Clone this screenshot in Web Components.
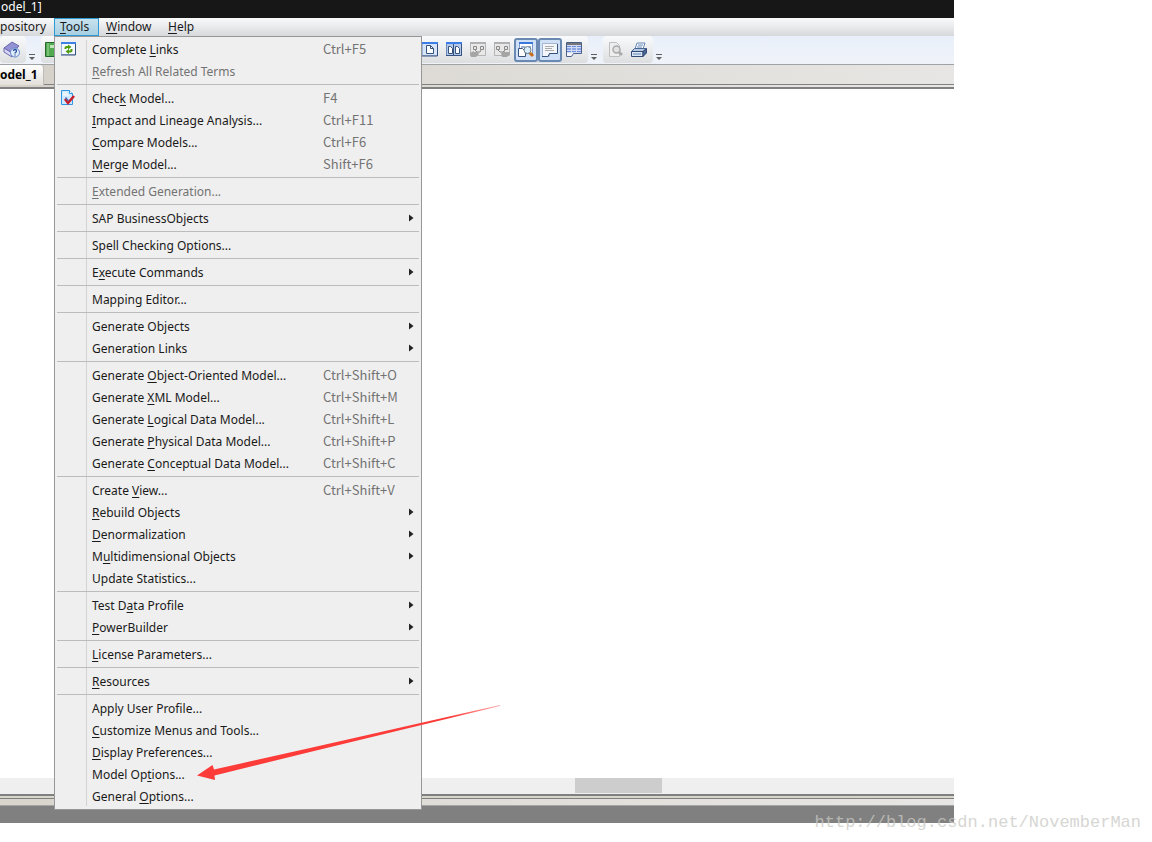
<!DOCTYPE html>
<html lang="en">
<head>
<meta charset="utf-8">
<title>Model_1</title>
<style>
body { margin: 0; background: #fff; font: 12px/22px "Noto Sans", "Open Sans", sans-serif; color: #1a1a1a; }
</style>
</head>
<body>
<app-window></app-window>

<template id="app">
<style>
:host { display: block; position: relative; min-height: 100vh; }
.frame { display: flex; flex-direction: column; position: relative; margin-right: 198px; min-height: calc(100vh - 19px); background: #808080; }
header { height: 18px; background: #171717; color: #fff; line-height: 14px; padding-left: 1px; }
nav { display: flex; height: 18px; background: linear-gradient(#fafbfb, #d6d8db); }
.strip { box-sizing: border-box; display: flex; height: 24px; border-bottom: 2px solid #808080; background: linear-gradient(90deg, #d5d1c9, #e7e6e4); }
.tab { box-sizing: border-box; width: 44px; height: 20px; border: 0; border-right: 1px solid #bbb; border-radius: 0 4px 0 0; padding: 0; background: linear-gradient(#fff, #e3e0da); color: #000; font: bold 12px/16px "Open Sans", sans-serif; text-align: left; }
.strip i { flex: 1; height: 19px; border-bottom: 1px solid #808080; }
main { flex: 1; background: #fff; }
.scroll { height: 16px; background: #efefef; }
.thumb { width: 87px; height: 15px; margin-left: 60.3%; background: #cdcdcd; }
.pane { height: 2px; border-top: 2px solid #808080; border-bottom: 1px solid #808080; background: #d8d5cb; }
.dock { height: 6px; border-bottom: 1px solid #a5a5a5; background: linear-gradient(90deg, #d9d5cd, #e8e6e4); }
footer { height: 17px; }
menu-panel { position: absolute; left: 54px; top: 36px; }
.arrow { position: absolute; left: 190px; top: 700px; pointer-events: none; }
.mark { position: absolute; right: 11px; bottom: 8px; font: 17px/22px "Liberation Mono", monospace; color: #c9c9c4; opacity: .75; }
</style>
<div class="frame">
  <header>odel_1]</header>
  <nav>
    <bar-entry style="--w:54px;--pad:0">pository</bar-entry>
    <bar-entry style="--w:45px;--pad:6px" open><u>T</u>ools</bar-entry>
    <bar-entry style="--w:62px;--pad:7px"><u>W</u>indow</bar-entry>
    <bar-entry style="--w:42px;--pad:7px"><u>H</u>elp</bar-entry>
  </nav>
  <tool-bar></tool-bar>
  <div class="strip"><button class="tab">odel_1</button><i></i></div>
  <main></main>
  <div class="scroll"><div class="thumb"></div></div>
  <div class="pane"></div>
  <div class="dock"></div>
  <footer></footer>
  <menu-panel>
    <menu-entry key="Ctrl+F5"><svg slot="icon" width="18" height="16" viewBox="0 0 18 16"><path d="M1.500 1.500h14v12h-14z" fill="#f5f9ff" stroke="#9bb3d5"/><path d="M1 1h15v2H1z" fill="#3c80e8"/><path d="M15.500 3v11H1" fill="none" stroke="#33507f"/><path d="M4.500 8V7q0-2 2-2H8V3.500L11.500 6 8 8.500V7H6.500v1zM12.500 8v1.500q0 2-2 2H9V13l-3.500-2.500L9 8v1.500h1.500V8z" fill="#4e9e0b"/></svg>Complete <u>L</u>inks</menu-entry>
    <menu-entry off><u>R</u>efresh All Related Terms</menu-entry>
    <menu-rule></menu-rule>
    <menu-entry key="F4"><svg slot="icon" width="18" height="16" viewBox="0 0 18 16"><path d="M1.500 .5h8l3 3v11h-11z" fill="#cdeafe" stroke="#2e97e5"/><path d="M9.500 .5v3h3" fill="#fff" stroke="#2e97e5"/><path d="M3 3h4M3 5h6" stroke="#fff"/><path d="M5 9l3 4 6-7" fill="none" stroke="#c91f2b" stroke-width="2.600"/><path d="M5.500 7.500l3 3.500" stroke="#5465a8" stroke-width="1.500"/></svg>Chec<u>k</u> Model...</menu-entry>
    <menu-entry key="Ctrl+F11"><u>I</u>mpact and Lineage Analysis...</menu-entry>
    <menu-entry key="Ctrl+F6"><u>C</u>ompare Models...</menu-entry>
    <menu-entry key="Shift+F6"><u>M</u>erge Model...</menu-entry>
    <menu-rule></menu-rule>
    <menu-entry off><u>E</u>xtended Generation...</menu-entry>
    <menu-rule></menu-rule>
    <menu-entry sub>SAP BusinessObjects</menu-entry>
    <menu-rule></menu-rule>
    <menu-entry>Spell Checking Options...</menu-entry>
    <menu-rule></menu-rule>
    <menu-entry sub>E<u>x</u>ecute Commands</menu-entry>
    <menu-rule></menu-rule>
    <menu-entry>Mapping Editor...</menu-entry>
    <menu-rule></menu-rule>
    <menu-entry sub>Generate Objects</menu-entry>
    <menu-entry sub>Generation Links</menu-entry>
    <menu-rule></menu-rule>
    <menu-entry key="Ctrl+Shift+O">Generate <u>O</u>bject-Oriented Model...</menu-entry>
    <menu-entry key="Ctrl+Shift+M">Generate <u>X</u>ML Model...</menu-entry>
    <menu-entry key="Ctrl+Shift+L">Generate <u>L</u>ogical Data Model...</menu-entry>
    <menu-entry key="Ctrl+Shift+P">Generate <u>P</u>hysical Data Model...</menu-entry>
    <menu-entry key="Ctrl+Shift+C">Generate <u>C</u>onceptual Data Model...</menu-entry>
    <menu-rule></menu-rule>
    <menu-entry key="Ctrl+Shift+V">Create <u>V</u>iew...</menu-entry>
    <menu-entry sub><u>R</u>ebuild Objects</menu-entry>
    <menu-entry sub><u>D</u>enormalization</menu-entry>
    <menu-entry sub>M<u>u</u>ltidimensional Objects</menu-entry>
    <menu-entry>Update Statistics...</menu-entry>
    <menu-rule></menu-rule>
    <menu-entry sub>Test D<u>a</u>ta Profile</menu-entry>
    <menu-entry sub><u>P</u>owerBuilder</menu-entry>
    <menu-rule></menu-rule>
    <menu-entry><u>L</u>icense Parameters...</menu-entry>
    <menu-rule></menu-rule>
    <menu-entry sub><u>R</u>esources</menu-entry>
    <menu-rule></menu-rule>
    <menu-entry>Apply User Profile...</menu-entry>
    <menu-entry><u>C</u>ustomize Menus and Tools...</menu-entry>
    <menu-entry><u>D</u>isplay Preferences...</menu-entry>
    <menu-entry>Model Op<u>t</u>ions...</menu-entry>
    <menu-entry>General <u>O</u>ptions...</menu-entry>
  </menu-panel>
</div>
<svg class="arrow" width="312" height="84" viewBox="190 700 312 84"><defs><linearGradient id="f" gradientUnits="userSpaceOnUse" x1="450" y1="0" x2="500" y2="0"><stop stop-color="#fd3b38"/><stop offset="1" stop-color="#fd3b38" stop-opacity=".4"/></linearGradient></defs><path d="M197 775.500L212.500 765l1.500 4.500L310 748 500 705v1L310 752l-95.500 23.500.500 4.500z" fill="url(#f)"/></svg>
<div class="mark">http://blog.csdn.net/NovemberMan</div>
</template>

<template id="bar">
<style>
:host { display: flex; }
button { box-sizing: border-box; width: var(--w); height: 18px; border: 1px solid transparent; border-width: 1px 0; padding: 0 0 0 var(--pad); background: none; color: inherit; font: inherit; line-height: 16px; text-align: left; white-space: nowrap; }
:host([open]) button { border: 1px solid #2d9bd2; padding-left: 5px; background: linear-gradient(#c9e2ee, #a7cfe2); }
::slotted(u) { text-underline-offset: 2px; }
</style>
<button><slot></slot></button>
</template>

<template id="panel">
<style>
:host { box-sizing: border-box; display: block; width: 368px; padding: 1px 2px 2px; border: 1px solid #979797; background: linear-gradient(90deg, transparent 31px, #d3d3d3 31px, #d3d3d3 32px, transparent 32px) 0 3px / 100% calc(100% - 6px) no-repeat, #efefef; }
</style>
<slot></slot>
</template>

<template id="rule">
<style>
:host { display: flex; align-items: center; height: 5px; }
hr { flex: 1; margin: 0; border: 0; border-top: 1px solid #bcbcbc; }
</style>
<hr>
</template>

<template id="entry">
<style>
:host { display: block; height: 22px; }
button { box-sizing: border-box; display: grid; grid-template-columns: 35px 231px 1fr 10px; align-items: center; width: 100%; height: 22px; border: 0; padding: 0; background: none; color: inherit; font: inherit; text-align: left; white-space: nowrap; }
.label { padding-top: 2px; line-height: 20px; }
.key { font: 13px/22px "Noto Sans CJK SC", sans-serif; }
button:disabled, .key { color: #737373; }
.icon { display: flex; padding-left: 3px; }
svg { grid-column: 4; }
:host(:not([sub])) svg { display: none; }
::slotted(u) { text-underline-offset: 2px; }
</style>
<button><span class="icon"><slot name="icon"></slot></span><span class="label"><slot></slot></span><span class="key"></span><svg width="5" height="8" viewBox="0 0 5 8"><path d="M0 0.500l4.500 3.500L0 7.500z" fill="#222"/></svg></button>
</template>

<template id="tools">
<style>
:host { display: flex; height: 28px; background: linear-gradient(#e9effa, #eff3f9); border-bottom: 1px solid #a0a3a5; }
.group { display: flex; align-items: center; box-sizing: border-box; height: 27px; border-radius: 4px; background: linear-gradient(#f9fafb, #dcdee0); }
.help { width: 26px; }
.model { width: 547px; margin-left: 3px; justify-content: space-between; }
.right { display: flex; margin-right: 2px; }
.print { width: 50px; margin-left: 3px; }
button { box-sizing: border-box; display: flex; align-items: center; justify-content: center; width: 24px; height: 24px; border: 0; padding: 0; background: none; }
button.on { border: 2px solid #6989b3; border-radius: 3px; background: #cfe0f7; }
button.more { width: 12px; height: 27px; padding-top: 15px; }
</style>
<div class="group help"><button aria-label="Help"><svg width="18" height="18" viewBox="0 0 18 18"><path d="M1 7l8-6 7 4-7 7z" fill="#9292d4" stroke="#6b68ae"/><path d="M1 7v4l8 5v-4z" fill="#d8d6f4" stroke="#6b68ae"/><circle cx="12" cy="11.500" r="4.500" fill="#e1edfa" stroke="#6084c8"/><path d="M10.500 10q0-1.500 1.500-1.500t1.500 1.500q0 1-1.500 2v.5M12 13.500v1" fill="none" stroke="#234d9c" stroke-width="1.300"/></svg></button></div>
<button class="more" aria-label="More help tools"><svg width="8" height="6"><path d="M1 0h6v1H1zM1 3h6l-3 3z" fill="#606060"/></svg></button>
<div class="group model">
  <button aria-label="Glossary"><svg width="18" height="18" viewBox="0 0 18 18"><path d="M1.500 1.500h13v14h-13z" fill="#52aa50" stroke="#23672a"/><path d="M4 2v13" stroke="#a5d49f" stroke-width="1"/><path d="M6 4h6v3H6z" fill="#bfe5b9"/></svg></button>
  <div class="right">
    <button aria-label="Page"><svg width="18" height="18" viewBox="0 0 18 18"><path d="M1.500 1.500h15v13h-15z" fill="#d8e4f8" stroke="#9cb2d8"/><path d="M1 1h16v2H1z" fill="#3c7ee6"/><path d="M16.500 3v12H1" fill="none" stroke="#38517f"/><path d="M5.500 4.500h4l3 3v5h-7z" fill="#fff" stroke="#36527f"/><path d="M9.500 4.500v3h3" fill="none" stroke="#36527f"/></svg></button>
    <button aria-label="Pages"><svg width="18" height="18" viewBox="0 0 18 18"><path d="M1.500 1.500h15v13h-15z" fill="#b4c8ea" stroke="#6c88b8"/><path d="M1 1h16v2H1z" fill="#3c7ee6"/><path d="M3.500 5.500h2l2 2v5h-4zM10.500 5.500h2l2 2v5h-4z" fill="#fff" stroke="#36527f"/><path d="M8.500 3v12M1 14.500h15.500V3" fill="none" stroke="#36527f"/></svg></button>
    <button aria-label="Find parent"><svg width="18" height="18" viewBox="0 0 18 18"><path d="M1.500 1.500h15v13h-15z" fill="#e8e8e8" stroke="#b5b5b5"/><path d="M1 1h16v2H1z" fill="#b0b0b0"/><path d="M4.500 5.500h3v3h-3zM11.500 5.500h3v3h-3zM6 9l2 2h3l1-2" fill="none" stroke="#888"/><path d="M1 12l4-2v1h4l1 2-3 3H2z" fill="#a5a5a5"/></svg></button>
    <button aria-label="Find child"><svg width="18" height="18" viewBox="0 0 18 18"><path d="M1.500 1.500h15v13h-15z" fill="#e8e8e8" stroke="#b5b5b5"/><path d="M1 1h16v2H1z" fill="#b0b0b0"/><path d="M3.500 5.500h3v3h-3zM11.500 5.500h3v3h-3zM5 9l2 2h3l2-2" fill="none" stroke="#888"/><path d="M8 12l4-2v1h4l1 2-3 3H9z" fill="#a5a5a5"/></svg></button>
    <button class="on" aria-label="Browser"><svg width="18" height="18" viewBox="0 0 18 18"><path d="M2.500 2.500h13v10h-13z" fill="#fff" stroke="#7d98cb"/><path d="M2 1h14v2H2z" fill="#3a78dd"/><path d="M4 6h4M11 6h3" stroke="#3c65a5"/><path d="M1.500 7.500h4l3 3v5h-7z" fill="#fff" stroke="#36527f"/><circle cx="10.500" cy="9" r="3.500" fill="#d8edfd" stroke="#6f7c88"/><path d="M13 12l3 3" stroke="#c76d14" stroke-width="3"/></svg></button>
    <button class="on" aria-label="Output"><svg width="18" height="18" viewBox="0 0 18 18"><path d="M1.500 2.500h15v10h-8v3h-7z" fill="#f3f6fb" stroke="#a4b5cf"/><path d="M16.500 3v9.500H8.500L7 15.500H1" fill="none" stroke="#38517f"/><path d="M4 5.500h9M4 7.500h7M4 9.500h9" stroke="#aaa"/></svg></button>
    <button aria-label="Results"><svg width="18" height="18" viewBox="0 0 18 18"><path d="M1.500 1.500h15v11h-8l-2 3h-5z" fill="#f4f6fb" stroke="#4b5f8b"/><path d="M2 2h14v2H2z" fill="#777"/><path d="M2 5.500h14M2 8h14M2 10.500h14" stroke="#6b8ce0" stroke-width="1.500"/><path d="M6.500 4v8M11.500 4v8" stroke="#d5dcec"/></svg></button>
  </div>
</div>
<button class="more" aria-label="More model tools"><svg width="8" height="6"><path d="M1 0h6v1H1zM1 3h6l-3 3z" fill="#606060"/></svg></button>
<div class="group print">
  <button aria-label="Print preview"><svg width="18" height="18" viewBox="0 0 18 18"><path d="M3.500 1.500h7l3 3v11h-10z" fill="#eee" stroke="#bebebe"/><circle cx="10.500" cy="8.500" r="3.500" fill="#e2e2e2" stroke="#aaa" stroke-width="1.500"/><path d="M13 11l3 3" stroke="#aaa" stroke-width="2.500"/></svg></button>
  <button aria-label="Print"><svg width="18" height="18" viewBox="0 0 18 18"><path d="M5 8l2-6h8l-2 6z" fill="#fff" stroke="#6286b5"/><path d="M1.500 10.500l3-3H16l-3 3z" fill="#b5c8e3" stroke="#496793"/><path d="M1.500 10.500H13v5H1.500z" fill="#dbe6f5" stroke="#314a73"/><path d="M13 10.500l3.500-3v4.500L13 15.500z" fill="#4a6794" stroke="#314a73"/><path d="M3 13h8M8 4h5M7 6h5" stroke="#6286b5"/></svg></button>
</div>
<button class="more" aria-label="More print tools"><svg width="8" height="6"><path d="M1 0h6v1H1zM1 3h6l-3 3z" fill="#606060"/></svg></button>
</template>

<script>
class Base extends HTMLElement {
  constructor() {
    super();
    const source = document.getElementById(this.constructor.template);
    this.attachShadow({ mode: "open" }).append(source.content.cloneNode(true));
  }
}
class BarEntry extends Base { static template = "bar"; }
class MenuPanel extends Base { static template = "panel"; }
class MenuRule extends Base { static template = "rule"; }
class ToolBar extends Base { static template = "tools"; }
class MenuEntry extends Base {
  static template = "entry";
  connectedCallback() {
    this.shadowRoot.querySelector(".key").textContent = this.getAttribute("key") || "";
    this.shadowRoot.querySelector("button").disabled = this.hasAttribute("off");
  }
}
class AppWindow extends Base { static template = "app"; }
customElements.define("bar-entry", BarEntry);
customElements.define("menu-panel", MenuPanel);
customElements.define("menu-rule", MenuRule);
customElements.define("menu-entry", MenuEntry);
customElements.define("tool-bar", ToolBar);
customElements.define("app-window", AppWindow);
</script>
</body>
</html>
